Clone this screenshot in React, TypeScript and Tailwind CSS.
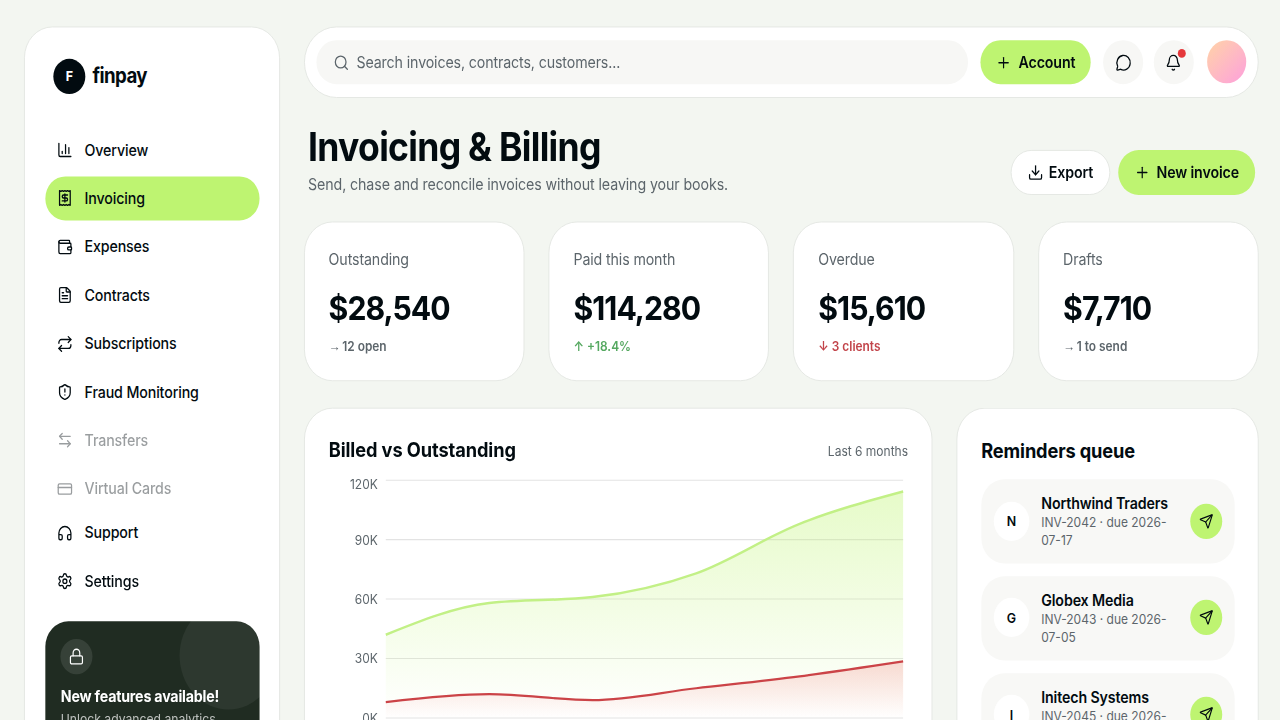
import {
  ArrowLeftRight,
  Bell,
  ChartColumn,
  CreditCard,
  Download,
  FileText,
  Headphones,
  Lock,
  MessageCircle,
  Plus,
  Receipt,
  Repeat,
  Search,
  Send,
  Settings,
  ShieldAlert,
  Wallet,
  type LucideIcon,
} from "lucide-react";

interface NavEntry {
  label: string;
  icon: LucideIcon;
  active?: boolean;
  disabled?: boolean;
}

const MAIN_NAV: NavEntry[] = [
  { label: "Overview", icon: ChartColumn },
  { label: "Invoicing", icon: Receipt, active: true },
  { label: "Expenses", icon: Wallet },
  { label: "Contracts", icon: FileText },
  { label: "Subscriptions", icon: Repeat },
  { label: "Fraud Monitoring", icon: ShieldAlert },
  { label: "Transfers", icon: ArrowLeftRight, disabled: true },
  { label: "Virtual Cards", icon: CreditCard, disabled: true },
];

const FOOTER_NAV: NavEntry[] = [
  { label: "Support", icon: Headphones },
  { label: "Settings", icon: Settings },
];

const STATS = [
  { label: "Outstanding", value: "$28,540", trend: "flat", note: "12 open" },
  { label: "Paid this month", value: "$114,280", trend: "up", note: "+18.4%" },
  { label: "Overdue", value: "$15,610", trend: "down", note: "3 clients" },
  { label: "Drafts", value: "$7,710", trend: "flat", note: "1 to send" },
];

const REMINDERS = [
  { name: "Northwind Traders", invoice: "INV-2042", due: "2026-07-17" },
  { name: "Globex Media", invoice: "INV-2043", due: "2026-07-05" },
  { name: "Initech Systems", invoice: "INV-2045", due: "2026-07-09" },
];

const BILLED = [42, 58, 61, 73, 98, 114.28];
const OUTSTANDING = [8, 12, 9, 15, 21, 28.54];

const CARD = "border border-[#e3e6e2] bg-white";
const BODY = "text-[16px] tracking-[-0.009em]";

function NavItem({ item }: { item: NavEntry }) {
  const Icon = item.icon;
  return (
    <a
      className={`flex h-[44.5px] items-center gap-[13.3px] rounded-full pb-px pl-[13px] font-medium ${BODY} ${
        item.active ? "bg-[#bef471]" : ""
      } ${item.disabled ? "opacity-40" : ""}`}
    >
      <Icon size={18} strokeWidth={1.9} className="mt-px" />
      {item.label}
    </a>
  );
}

function Sidebar() {
  return (
    <aside className={`flex h-[900px] w-[287.5px] shrink-0 flex-col rounded-[32px] pt-[31.5px] pr-[21.5px] pl-[22.8px] ${CARD}`}>
      <div className="flex h-9 items-center gap-2 pl-[9.2px]">
        <span className="flex size-9 items-center justify-center rounded-full bg-[#020b10] text-[14px] font-bold text-white">
          F
        </span>
        <span className="text-[21px] font-bold tracking-[-0.03em]">finpay</span>
      </div>
      <nav className="mt-[35.3px] flex flex-col gap-[4.9px]">
        {MAIN_NAV.map((item) => (
          <NavItem key={item.label} item={item} />
        ))}
      </nav>
      <nav className="mt-[0.6px] flex flex-col gap-[4.9px]">
        {FOOTER_NAV.map((item) => (
          <NavItem key={item.label} item={item} />
        ))}
      </nav>
      <div className="relative mt-[18.8px] overflow-hidden rounded-[26px] bg-[#202c22] p-[17.6px] text-white">
        <div className="absolute -top-5 -right-5 size-[110px] rounded-full bg-white/6" />
        <span className="flex size-9 items-center justify-center rounded-full bg-white/10">
          <Lock size={18} strokeWidth={1.8} />
        </span>
        <h3 className="mt-[11.3px] text-[16px] leading-[22px] font-bold tracking-[-0.014em]">New features available!</h3>
        <p className="mt-[3.7px] text-[13.7px] leading-[18px] text-white/70">Unlock advanced analytics</p>
      </div>
    </aside>
  );
}

function TopBar() {
  return (
    <header className={`flex h-[73px] items-center gap-3.5 rounded-full pr-[13px] pl-[13.5px] ${CARD}`}>
      <div className="flex h-[44.6px] flex-1 items-center gap-[8.5px] rounded-full bg-[#f7f7f5] pl-[18.5px] text-[#5c656b]">
        <Search size={18} strokeWidth={1.9} />
        <span className={`pb-px ${BODY}`}>Search invoices, contracts, customers...</span>
      </div>
      <button className={`flex h-[44.6px] items-center gap-[7.5px] rounded-full bg-[#bef471] px-[17.5px] pb-px font-semibold ${BODY}`}>
        <Plus size={18} strokeWidth={1.8} className="mt-px" />
        Account
      </button>
      <button className="flex size-[44.6px] items-center justify-center rounded-full bg-[#f7f7f5]">
        <MessageCircle size={18} strokeWidth={1.9} />
      </button>
      <button className="relative -ml-0.5 flex size-[44.6px] items-center justify-center rounded-full bg-[#f7f7f5]">
        <Bell size={18} strokeWidth={1.9} />
        <span className="absolute top-[9px] right-[9px] size-[9px] rounded-full bg-[#e5383b]" />
      </button>
      <div className="mb-px ml-[1.5px] size-11 rounded-full bg-linear-135 from-[#ffd3a5] to-[#fd9fdb]" />
    </header>
  );
}

function StatCard({ stat }: { stat: (typeof STATS)[number] }) {
  return (
    <div className={`h-[163px] rounded-[32px] pt-[26px] pl-[27.2px] ${CARD}`}>
      <p className={`leading-[22px] text-[#5c656b] ${BODY}`}>{stat.label}</p>
      <p className="mt-[18.5px] text-[34px] leading-[41px] font-bold tracking-[-0.032em]">{stat.value}</p>
      <p
        className={`mt-[9px] text-[13.4px] leading-[18px] font-semibold ${
          stat.trend === "up" ? "text-[#55a860]" : stat.trend === "down" ? "text-[#c2444a]" : "text-[#5c656b]"
        }`}
      >
        {stat.trend === "flat" && <span className="mr-[-1.5px] font-['Liberation_Sans'] font-normal">→</span>}
        {stat.trend === "up" && "↑"}
        {stat.trend === "down" && "↓"} {stat.note}
      </p>
    </div>
  );
}

const PLOT = { left: 64, top: 8, width: 582, height: 242.6 };

// Monotone cubic interpolation, so the curve never overshoots its points
function monotonePath(values: number[]) {
  const step = PLOT.width / (values.length - 1);
  const xs = values.map((_, i) => PLOT.left + i * step);
  const ys = values.map((v) => PLOT.top + PLOT.height * (1 - v / 120));
  const slopes = ys.slice(1).map((y, i) => (y - ys[i]) / step);
  const t = ys.map((_, i) => {
    if (i === 0 || i === ys.length - 1) return 0;
    const a = slopes[i - 1];
    const b = slopes[i];
    if (a * b <= 0) return 0;
    return Math.sign(a) * 2 * Math.min(Math.abs(a), Math.abs(b), Math.abs(a + b) / 4);
  });
  t[0] = (3 * slopes[0] - t[1]) / 2;
  const last = ys.length - 1;
  t[last] = (3 * slopes[last - 1] - t[last - 1]) / 2;
  let d = `M${xs[0]},${ys[0]}`;
  for (let i = 1; i < xs.length; i++) {
    const h = step / 3;
    d += `C${xs[i - 1] + h},${ys[i - 1] + t[i - 1] * h},${xs[i] - h},${ys[i] - t[i] * h},${xs[i]},${ys[i]}`;
  }
  return d;
}

function BilledChart() {
  const bottom = PLOT.top + PLOT.height;
  const right = PLOT.left + PLOT.width;
  const close = `L${right},${bottom}L${PLOT.left},${bottom}Z`;
  const billed = monotonePath(BILLED);
  const outstanding = monotonePath(OUTSTANDING);

  return (
    <svg width="652" height="290" className="block">
      <defs>
        <linearGradient id="billed" x1="0" y1="0" x2="0" y2="1">
          <stop offset="0%" stopColor="#bef471" stopOpacity="0.38" />
          <stop offset="100%" stopColor="#bef471" stopOpacity="0" />
        </linearGradient>
        <linearGradient id="outstanding" x1="0" y1="0" x2="0" y2="1">
          <stop offset="0%" stopColor="#f0484c" stopOpacity="0.2" />
          <stop offset="100%" stopColor="#f0484c" stopOpacity="0" />
        </linearGradient>
      </defs>
      {[120, 90, 60, 30, 0].map((tick) => {
        const y = PLOT.top + PLOT.height * (1 - tick / 120);
        return (
          <g key={tick}>
            <line x1={PLOT.left} x2={right} y1={y} y2={y} stroke="#e3e3e3" strokeWidth="1.1" />
            <text x={PLOT.left - 9} y={tick === 120 ? y + 9.5 : y + 5} textAnchor="end" className="fill-[#5c656b] text-[13.5px]">
              {`${tick}K`}
            </text>
          </g>
        );
      })}
      <path d={billed + close} fill="url(#billed)" />
      <path d={billed} fill="none" stroke="#c2f086" strokeWidth="2.5" />
      <path d={outstanding + close} fill="url(#outstanding)" />
      <path d={outstanding} fill="none" stroke="#cb4347" strokeWidth="2.2" />
    </svg>
  );
}

function ReminderRow({ reminder }: { reminder: (typeof REMINDERS)[number] }) {
  return (
    <div className="flex h-[85.5px] items-center gap-[13.5px] rounded-[26px] bg-[#f8f8f6] px-3.5 pb-px">
      <span className="flex size-10 shrink-0 items-center justify-center rounded-full bg-white text-[14px] font-semibold">
        {reminder.name[0]}
      </span>
      <div className="flex-1">
        <p className={`leading-[21px] font-semibold whitespace-nowrap ${BODY}`}>{reminder.name}</p>
        <p className="text-[13.5px] leading-[18.2px] text-[#5c656b]">{`${reminder.invoice} · due ${reminder.due}`}</p>
      </div>
      <button className="flex size-9 shrink-0 items-center justify-center rounded-full bg-[#bef471]">
        <Send size={16} strokeWidth={1.9} />
      </button>
    </div>
  );
}

export default function App() {
  return (
    <div className="h-[720px] w-[1280px] overflow-hidden bg-[#f3f6f1]">
      <div className="flex h-[735px] w-[1440px] origin-top-left scale-x-[0.8889] scale-y-[0.98] gap-[27px] pt-[27px] pr-6 pl-[27px] font-['Inter',sans-serif] text-[#020b10]">
        <Sidebar />
        <main className="min-w-0 flex-1">
          <TopBar />
          <div className="flex h-[126.3px] items-end justify-between pr-1 pb-[27.6px] pl-[5px]">
            <div>
              <h1 className="text-[40px] leading-[44px] font-bold tracking-[-0.02em]">Invoicing &amp; Billing</h1>
              <p className="mt-[5.5px] text-[16px] leading-[21px] tracking-[-0.007em] text-[#5c656b]">
                Send, chase and reconcile invoices without leaving your books.
              </p>
            </div>
            <div className="flex gap-[9px]">
              <button className={`flex h-[46px] items-center gap-1.5 rounded-full px-[18px] font-semibold ${BODY} ${CARD}`}>
                <Download size={18} strokeWidth={1.9} />
                Export
              </button>
              <button className={`flex h-[46px] items-center gap-[7px] rounded-full bg-[#bef471] px-[18.2px] font-semibold ${BODY}`}>
                <Plus size={18} strokeWidth={1.8} />
                New invoice
              </button>
            </div>
          </div>

          <section className="grid grid-cols-4 gap-[27.2px]">
            {STATS.map((stat) => (
              <StatCard key={stat.label} stat={stat} />
            ))}
          </section>

          <section className="mt-[27.1px] flex gap-[27.2px]">
            <div className={`h-[400px] w-[707px] rounded-[32px] pt-[28.3px] pr-[26px] pl-[27.3px] ${CARD}`}>
              <div className="flex h-7 items-center justify-between">
                <h2 className="text-[20.5px] font-bold tracking-[-0.005em]">Billed vs Outstanding</h2>
                <span className="text-[13.5px] text-[#5c656b]">Last 6 months</span>
              </div>
              <div className="mt-[8.4px]">
                <BilledChart />
              </div>
            </div>
            <div className={`h-[400px] flex-1 rounded-[32px] pt-[28.3px] pr-[26.5px] pl-[27.2px] ${CARD}`}>
              <h2 className="h-7 text-[20.5px] leading-7 font-bold tracking-[-0.007em]">Reminders queue</h2>
              <div className="mt-[15.6px] flex flex-col gap-[13.4px]">
                {REMINDERS.map((reminder) => (
                  <ReminderRow key={reminder.name} reminder={reminder} />
                ))}
              </div>
            </div>
          </section>
        </main>
      </div>
    </div>
  );
}
